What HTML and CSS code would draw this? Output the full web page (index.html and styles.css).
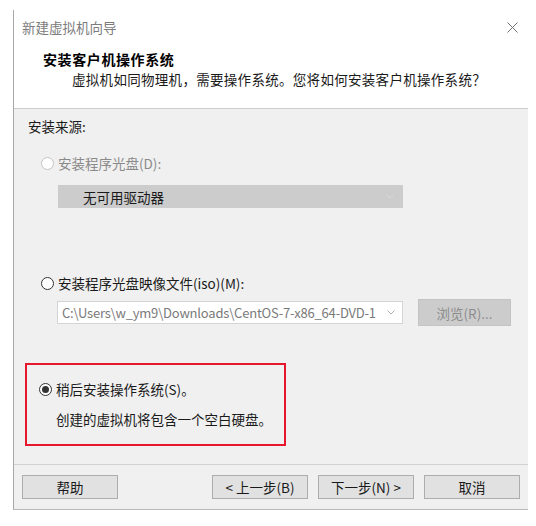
FILE: index.html
```html
<!DOCTYPE html>
<html lang="zh-CN">
<head>
<meta charset="utf-8">
<title>新建虚拟机向导</title>
<link rel="stylesheet" href="styles.css">
</head>
<body>
<div class="window">
  <div class="titlebar">
    <span class="title">新建虚拟机向导</span>
    <svg class="close" width="11" height="11" viewBox="0 0 11 11"><path d="M0.5 0.5 L10.5 10.5 M10.5 0.5 L0.5 10.5" stroke="#707070" stroke-width="1" fill="none"/></svg>
  </div>
  <div class="header">
    <div class="h-title">安装客户机操作系统</div>
    <div class="h-sub">虚拟机如同物理机，需要操作系统。您将如何安装客户机操作系统？</div>
  </div>
  <div class="body">
    <div class="label">安装来源:</div>

    <div class="radio-row disabled r1">
      <span class="radio"></span>
      <span>安装程序光盘(D):</span>
    </div>
    <div class="dropdown">
      <span class="dd-text">无可用驱动器</span>
      <svg class="chev" width="8" height="5" viewBox="0 0 8 5"><path d="M0.5 0.5 L4 4 L7.5 0.5" stroke="#d8d8d8" fill="none"/></svg>
    </div>

    <div class="radio-row r2">
      <span class="radio"></span>
      <span>安装程序光盘映像文件(iso)(M):</span>
    </div>
    <div class="combo-row">
      <div class="combo">
        <span class="combo-text">C:\Users\w_ym9\Downloads\CentOS-7-x86_64-DVD-1</span>
        <svg class="chev" width="8" height="5" viewBox="0 0 8 5"><path d="M0.5 0.5 L4 4 L7.5 0.5" stroke="#b0b0b0" fill="none"/></svg>
      </div>
      <div class="browse">浏览(R)...</div>
    </div>

    <div class="highlight">
      <div class="radio-row r3">
        <span class="radio checked"></span>
        <span>稍后安装操作系统(S)。</span>
      </div>
      <div class="later-desc">创建的虚拟机将包含一个空白硬盘。</div>
    </div>
  </div>
  <div class="footer">
    <div class="btn">帮助</div>
    <div class="spacer"></div>
    <div class="btn">&lt; 上一步(B)</div>
    <div class="btn">下一步(N) &gt;</div>
    <div class="btn">取消</div>
  </div>
</div>
</body>
</html>
```

FILE: styles.css
```css
* { box-sizing: border-box; }

html, body {
  margin: 0;
  padding: 0;
  background: #ffffff;
}

body {
  font-family: "Noto Sans CJK SC", "Noto Sans", sans-serif;
  font-size: 13.5px;
  line-height: 18px;
  color: #1a1a1a;
}

.window {
  margin: 10px 0 0 13px;
  width: 515px;
  height: 500px;
  border-left: 1px solid #a8a8a8;
  border-bottom: 1px solid #b8b8b8;
  display: flex;
  flex-direction: column;
}

.titlebar {
  height: 34px;
  display: flex;
  align-items: center;
  justify-content: space-between;
  padding: 0 10px 0 8px;
  background: #ffffff;
}

.title {
  color: #7c7c7c;
  line-height: 34px;
}

.close { display: block; }

.header {
  height: 65px;
  background: #ffffff;
  border-bottom: 1px solid #cdcdcd;
  padding: 6px 0 0 29px;
}

.h-title {
  font-weight: bold;
  font-size: 14px;
  letter-spacing: 0.6px;
  color: #000;
}

.h-sub {
  margin-top: 2px;
  padding-left: 29px;
  color: #1a1a1a;
  letter-spacing: 0.3px;
}

.body {
  height: 356px;
  background: #f0f0f0;
  padding: 8px 0 0 14px;
  border-bottom: 1px solid #d2d2d2;
}

.label { height: 18px; }

.radio-row {
  display: flex;
  align-items: center;
  height: 18px;
}

.radio {
  width: 13px;
  height: 13px;
  border-radius: 50%;
  border: 1px solid #333333;
  background: #ffffff;
  margin-right: 4px;
  flex: none;
  position: relative;
}

.radio.checked::after {
  content: "";
  position: absolute;
  left: 2px;
  top: 2px;
  width: 7px;
  height: 7px;
  border-radius: 50%;
  background: #333333;
}

.disabled { color: #8a8a8a; }
.disabled .radio { border-color: #c4c4c4; }

.r1 { margin: 19px 0 0 13px; }

.dropdown {
  margin: 13px 0 0 30px;
  width: 345px;
  height: 23px;
  background: #cccccc;
  display: flex;
  align-items: center;
  justify-content: space-between;
  padding: 0 9px 0 25px;
  color: #1a1a1a;
}

.chev { display: block; flex: none; }

.r2 { margin: 66px 0 0 13px; }

.combo-row {
  margin: 7px 0 0 29px;
  display: flex;
  align-items: center;
  height: 27px;
}

.combo {
  width: 346px;
  height: 23px;
  background: #ffffff;
  border: 1px solid #d4d4d4;
  display: flex;
  align-items: center;
  justify-content: space-between;
  padding: 0 7px 0 4px;
  color: #7a7a7a;
}

.combo-text {
  white-space: nowrap;
  font-size: 13px;
  letter-spacing: -0.2px;
}

.browse {
  margin-left: 15px;
  width: 93px;
  height: 27px;
  background: #cccccc;
  border: 1px solid #c4c4c4;
  color: #8c8c8c;
  display: flex;
  align-items: center;
  justify-content: center;
}

.highlight {
  margin: 37px 0 0 -3px;
  width: 261px;
  height: 83px;
  border: 2px solid #e6162d;
  padding: 15px 0 0 12px;
}

.later-desc {
  margin: 12px 0 0 17px;
  height: 18px;
}

.footer {
  flex: 1;
  background: #f0f0f0;
  display: flex;
  align-items: flex-start;
  padding: 10px 8px 0 8px;
  gap: 10px;
}

.spacer { flex: 1; }

.btn {
  width: 96px;
  height: 24px;
  background: #e1e1e1;
  border: 1px solid #adadad;
  display: flex;
  align-items: center;
  justify-content: center;
  color: #1a1a1a;
}
```
